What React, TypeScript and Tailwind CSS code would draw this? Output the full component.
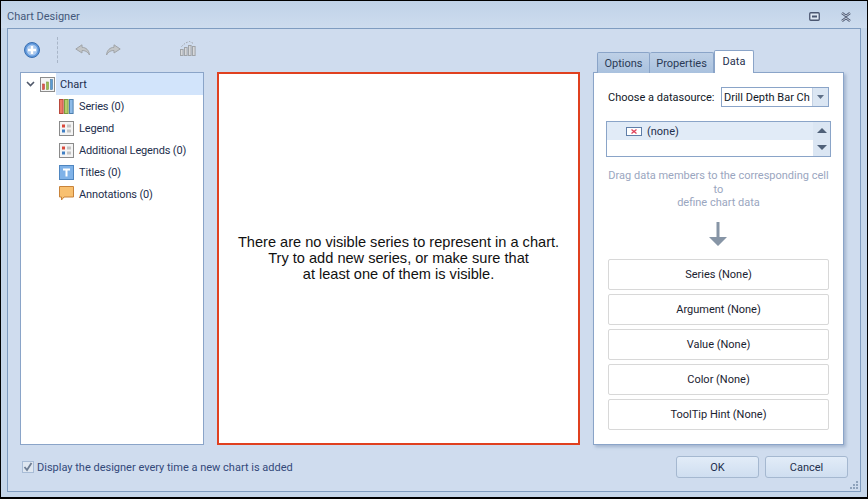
import React from "react";

const font = { fontFamily: 'Roboto, "Liberation Sans", sans-serif' };
const mainFont = { fontFamily: '"Liberation Sans", Arial, sans-serif' };

function ChartIcon() {
  return (
    <svg width="15" height="15" viewBox="0 0 15 15">
      <rect x="0.5" y="0.5" width="14" height="14" fill="#f4f4f4" stroke="#8c8c8c" />
      <rect x="2.5" y="7" width="2" height="5.5" fill="#e2574c" stroke="#b5493c" strokeWidth="0.6" />
      <rect x="6.5" y="5" width="2" height="7.5" fill="#9cc04f" stroke="#7d9a3e" strokeWidth="0.6" />
      <rect x="10.5" y="2.5" width="2" height="10" fill="#5b9bd5" stroke="#44789f" strokeWidth="0.6" />
    </svg>
  );
}
function SeriesIcon() {
  return (
    <svg width="15" height="15" viewBox="0 0 15 15">
      <rect x="0.5" y="0.5" width="3.6" height="14" fill="#ee7a66" stroke="#b8493c" />
      <rect x="5.5" y="0.5" width="3.6" height="14" fill="#b4cf6a" stroke="#7d9a3e" />
      <rect x="10.5" y="0.5" width="3.6" height="14" fill="#8ebbe8" stroke="#4d7fae" />
    </svg>
  );
}
function LegendIcon() {
  return (
    <svg width="15" height="15" viewBox="0 0 15 15">
      <rect x="0.5" y="0.5" width="14" height="14" fill="#f4f4f4" stroke="#8a8a8a" />
      <rect x="3" y="3.5" width="3" height="3" fill="#d9493c" />
      <rect x="8" y="3.5" width="4" height="3" fill="#c4c4c4" />
      <rect x="3" y="8.5" width="3" height="3" fill="#3f7fc4" />
      <rect x="8" y="8.5" width="4" height="3" fill="#c4c4c4" />
    </svg>
  );
}
function TitlesIcon() {
  return (
    <svg width="15" height="15" viewBox="0 0 15 15">
      <rect x="0.5" y="0.5" width="14" height="14" fill="#7fb2e8" stroke="#4f86c0" />
      <path d="M4 3.5h7v2H8.5v6h-2v-6H4z" fill="#ffffff" />
    </svg>
  );
}
function AnnotationIcon() {
  return (
    <svg width="15" height="16" viewBox="0 0 15 16">
      <path d="M0.5 0.5h14v10.5h-9.5l-2.5 3v-3h-2z" fill="#f8c070" stroke="#c8833a" />
    </svg>
  );
}

function TreeRow({ icon, label }: { icon: React.ReactNode; label: string }) {
  return (
    <div className="flex h-[22px] items-center pl-[38px]">
      <span className="flex w-[18px] shrink-0">{icon}</span>
      <span className="ml-[2px] tracking-[-0.15px] text-[#1e2f4d]">{label}</span>
    </div>
  );
}

function FieldButton({ label }: { label: string }) {
  return (
    <div className="flex h-[31px] w-[221px] items-center justify-center rounded-[2px] border border-[#d8d8d8] bg-white text-[#1a2230]">
      {label}
    </div>
  );
}

function FooterButton({ label }: { label: string }) {
  return (
    <div className="flex h-[22px] w-[83px] items-center justify-center rounded-[3px] border border-[#a5b8d0] bg-gradient-to-b from-[#e2ecf8] to-[#cfdef0] text-[#1e2f4d]">
      {label}
    </div>
  );
}

export default function App() {
  return (
    <div
      className="relative flex h-[499px] w-[868px] flex-col border-t border-b-2 border-l border-r border-black bg-[#c5d6ea] text-[11px] leading-none"
      style={font}
    >
      <div className="flex h-[27px] shrink-0 items-center justify-between bg-gradient-to-b from-[#c0d2e8] to-[#cddcee] pl-[6px] pr-[15px] pt-[4px]">
        <span className="text-[11px] text-[#44587a]">Chart Designer</span>
        <div className="flex items-center gap-[20px]">
          <svg width="11" height="9" viewBox="0 0 11 9">
            <rect x="0.75" y="0.75" width="9.5" height="7.5" rx="1" fill="#dfe8f3" stroke="#4a5670" strokeWidth="1.3" />
            <rect x="3" y="3.5" width="5" height="2" fill="#4a5670" />
          </svg>
          <svg width="12" height="10" viewBox="0 0 12 10">
            <path d="M2 1l4 3 4-3M2 9l4-3 4 3" fill="none" stroke="#4a5670" strokeWidth="2.4" />
            <path d="M2 1l4 3 4-3M2 9l4-3 4 3" fill="none" stroke="#e8eef6" strokeWidth="0.8" />
          </svg>
        </div>
      </div>

      <div className="mx-[6px] mb-[5px] flex min-h-0 flex-1 flex-col border border-[#7f9cc0] bg-[#cfdcee]">
        <div className="flex h-[43px] shrink-0 items-center pb-[2px] pl-[16px]">
          <svg width="16" height="16" viewBox="0 0 16 16">
            <circle cx="8" cy="8" r="7.5" fill="#5f98dc" stroke="#3a6fb0" />
            <circle cx="8" cy="8" r="5.5" fill="#a9c8ee" />
            <path d="M8 4v8M4 8h8" stroke="#ffffff" strokeWidth="2.4" />
          </svg>
          <div className="ml-[17px] h-[26px] border-l border-dashed border-[#a9b6c8]" />
          <svg className="ml-[17px]" width="16" height="12" viewBox="0 0 16 12">
            <path d="M7 0.8L0.8 5l6.2 4V6.5c3 0 5.5 1 7.5 4.5C14 6 11 3.5 7 3.3z" fill="#c3c6c8" stroke="#a0a4a8" />
          </svg>
          <svg className="ml-[14px]" width="16" height="12" viewBox="0 0 16 12">
            <path d="M9 0.8L15.2 5 9 9V6.5c-3 0-5.5 1-7.5 4.5C2 6 5 3.5 9 3.3z" fill="#c3c6c8" stroke="#a0a4a8" />
          </svg>
          <svg className="mb-[3px] ml-[59px]" width="16" height="16" viewBox="0 0 16 16">
            <rect x="0.5" y="9.5" width="2.6" height="6" fill="#d6d8da" stroke="#a0a4a8" />
            <rect x="4.5" y="7.5" width="2.6" height="8" fill="#d6d8da" stroke="#a0a4a8" />
            <rect x="8.5" y="5.5" width="2.6" height="10" fill="#d6d8da" stroke="#a0a4a8" />
            <rect x="12.5" y="6.5" width="2.6" height="9" fill="#d6d8da" stroke="#a0a4a8" />
            <path d="M1.5 6.5L5.5 3 9.5 1.5 13.5 3.5" fill="none" stroke="#a0a4a8" strokeDasharray="1.5 1.5" />
          </svg>
        </div>

        <div className="flex h-[373px] shrink-0 pl-[12px]">
          <div className="h-full w-[184px] shrink-0 border border-[#8aa4c8] bg-white">
            <div className="flex h-[22px] items-center pl-[5px]">
              <svg width="9" height="6" viewBox="0 0 9 6">
                <path d="M1 1l3.5 3.5L8 1" fill="none" stroke="#50586a" strokeWidth="1.6" />
              </svg>
              <span className="ml-[5px] flex w-[16px] shrink-0">
                <ChartIcon />
              </span>
              <div className="flex h-full flex-1 items-center bg-[#d2e4fb] pl-[4px] text-[#1e2f4d]">Chart</div>
            </div>
            <TreeRow icon={<SeriesIcon />} label="Series (0)" />
            <TreeRow icon={<LegendIcon />} label="Legend" />
            <TreeRow icon={<LegendIcon />} label="Additional Legends (0)" />
            <TreeRow icon={<TitlesIcon />} label="Titles (0)" />
            <TreeRow icon={<AnnotationIcon />} label="Annotations (0)" />
          </div>

          <div
            className="ml-[13px] flex h-full w-[363px] shrink-0 items-center justify-center border-2 border-[#e0401f] bg-white text-center text-[14.6px] leading-[16px] text-[#111111]"
            style={mainFont}
          >
            <div className="pb-[2px]">
              There are no visible series to represent in a chart.
              <br />
              Try to add new series, or make sure that
              <br />
              at least one of them is visible.
            </div>
          </div>

          <div className="relative ml-[13px] h-full w-[251px] shrink-0">
            <div className="absolute -top-[22px] left-[4px] flex items-end">
              <div className="flex h-[21px] w-[53px] items-center justify-center rounded-t-[2px] border border-b-0 border-[#8aa4c8] bg-gradient-to-b from-[#bed0e6] to-[#a9c1de] text-[#2a3a55]">
                Options
              </div>
              <div className="flex h-[21px] w-[64px] items-center justify-center rounded-t-[2px] border border-b-0 border-l-0 border-[#8aa4c8] bg-gradient-to-b from-[#bed0e6] to-[#a9c1de] text-[#2a3a55]">
                Properties
              </div>
              <div className="z-10 flex h-[23px] w-[40px] items-center justify-center rounded-t-[2px] border border-b-0 border-[#8aa4c8] bg-white pb-[2px] text-[#1e2f4d]">
                Data
              </div>
            </div>
            <div className="flex h-full flex-col border border-[#8aa4c8] bg-white pl-[14px] shadow-[2px_2px_3px_rgba(80,110,150,0.35)]">
              <div className="mt-[14px] flex h-[20px] items-center">
                <span className="w-[113px] shrink-0 text-[#111827]">Choose a datasource:</span>
                <div className="flex h-[20px] w-[108px] items-center justify-between border border-[#8aa4c8]">
                  <span className="min-w-0 flex-1 overflow-hidden whitespace-nowrap pl-[2px] text-[#111827]">Drill Depth Bar Ch</span>
                  <div className="flex h-full w-[16px] shrink-0 items-center justify-center border-l border-[#c5d2e4] bg-[#dbe6f3]">
                    <svg width="7" height="4" viewBox="0 0 7 4">
                      <path d="M0 0h7L3.5 4z" fill="#5f7088" />
                    </svg>
                  </div>
                </div>
              </div>
              <div className="ml-[-2px] mt-[14px] flex h-[36px] w-[225px] border border-[#8aa4c8]">
                <div className="flex-1">
                  <div className="flex h-[18px] items-center bg-[#e1ebf7] pl-[19px]">
                    <div className="flex h-[9px] w-[16px] items-center justify-center border border-[#5f7ea8] bg-white">
                      <svg width="6" height="5" viewBox="0 0 6 5">
                        <path d="M0.5 0.5l5 4M5.5 0.5l-5 4" stroke="#e0405a" strokeWidth="1.3" />
                      </svg>
                    </div>
                    <span className="ml-[5px] text-[#1e2f4d]">(none)</span>
                  </div>
                </div>
                <div className="flex w-[17px] flex-col items-center justify-between bg-[#dbe6f3] py-[6px]">
                  <svg width="10" height="5" viewBox="0 0 10 5">
                    <path d="M0 5h10L5 0z" fill="#4f6078" />
                  </svg>
                  <svg width="10" height="5" viewBox="0 0 10 5">
                    <path d="M0 0h10L5 5z" fill="#4f6078" />
                  </svg>
                </div>
              </div>
              <div className="ml-[-14px] mt-[12px] w-[249px] text-center leading-[13.5px] text-[#9aa6c0]">
                Drag data members to the corresponding cell
                <br />
                to
                <br />
                define chart data
              </div>
              <svg className="ml-[101px] mt-[12px]" width="18" height="24" viewBox="0 0 18 24">
                <path d="M7.5 0h3v15H18l-9 9-9-9h7.5z" fill="#8795a6" />
              </svg>
              <div className="mt-[13px] flex flex-col gap-[4px]">
                <FieldButton label="Series (None)" />
                <FieldButton label="Argument (None)" />
                <FieldButton label="Value (None)" />
                <FieldButton label="Color (None)" />
                <FieldButton label="ToolTip Hint (None)" />
              </div>
            </div>
          </div>
        </div>

        <div className="relative flex flex-1 items-center pb-[2px] pl-[14px] pr-[12px]">
          <div className="flex h-[12px] w-[12px] items-center justify-center border border-[#a8bcd6] bg-[#dfe7f1]">
            <svg width="10" height="10" viewBox="0 0 10 10">
              <path d="M1.5 5l2.5 3 4.5-7" fill="none" stroke="#6d7d94" strokeWidth="1.8" />
            </svg>
          </div>
          <span className="ml-[3px] text-[#33497a]">Display the designer every time a new chart is added</span>
          <div className="ml-auto flex gap-[6px]">
            <FooterButton label="OK" />
            <FooterButton label="Cancel" />
          </div>
          <svg className="absolute bottom-[1px] right-[1px]" width="10" height="10" viewBox="0 0 10 10">
            <path d="M7 1h2v2H7zM4 4h2v2H4zM7 4h2v2H7zM1 7h2v2H1zM4 7h2v2H4zM7 7h2v2H7z" fill="#8fa3bc" />
          </svg>
        </div>
      </div>
    </div>
  );
}
